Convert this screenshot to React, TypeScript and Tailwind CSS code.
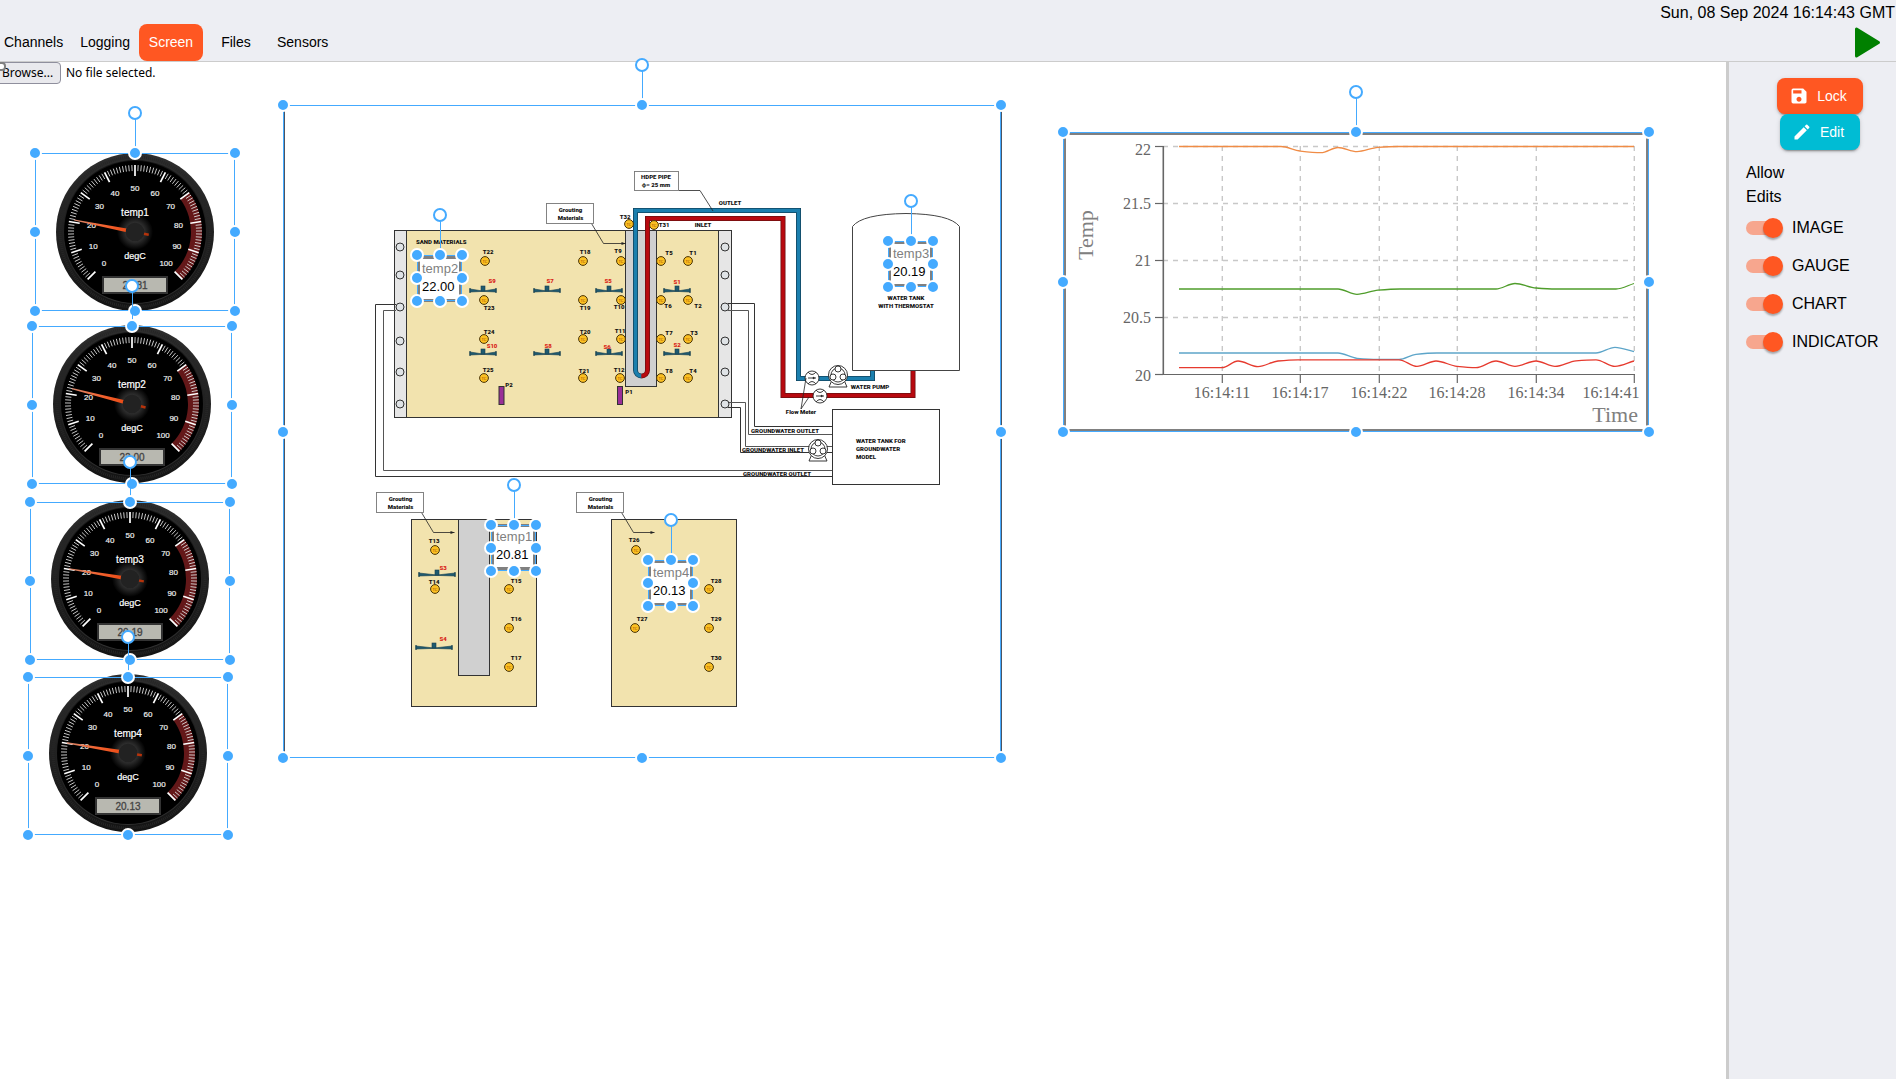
import React, { useState } from "react";
import { MdEdit, MdSave } from "react-icons/md";

type Box = { x: number; y: number; w: number; h: number };
type Point = [number, number];

/* ------------------------------------------------------------------ */
/* Canvas placement and selection handles                              */
/* ------------------------------------------------------------------ */

const Placed = ({ box, children }: { box: Box; children: React.ReactNode }) => (
  <div className="absolute" style={{ left: box.x, top: box.y, width: box.w, height: box.h }}>
    {children}
  </div>
);

const HANDLES: Point[] = [
  [0, 0],
  [50, 0],
  [100, 0],
  [0, 50],
  [100, 50],
  [0, 100],
  [50, 100],
  [100, 100],
];

const Selection = ({ box }: { box: Box }) => (
  <Placed box={box}>
    <div className="absolute inset-0 border border-[#44aaff]" />
    <div className="absolute bottom-full left-1/2 h-10 w-px bg-[#44aaff]" />
    <div className="absolute -top-[47px] left-1/2 size-3.5 -translate-x-1/2 rounded-full border-2 border-[#44aaff] bg-white" />
    {HANDLES.map(([hx, hy]) => (
      <div
        key={`${hx}-${hy}`}
        className="absolute size-3.5 -translate-x-1/2 -translate-y-1/2 rounded-full border-2 border-white bg-[#44aaff]"
        style={{ left: `${hx}%`, top: `${hy}%` }}
      />
    ))}
  </Placed>
);

/* ------------------------------------------------------------------ */
/* Radial gauge                                                        */
/* ------------------------------------------------------------------ */

const polar = (value: number, r: number): Point => {
  const a = ((value * 2.7 - 135) * Math.PI) / 180;
  return [Math.sin(a) * r, -Math.cos(a) * r];
};

const Gauge = ({ name, value }: { name: string; value: number }) => {
  const [b1, b2, b3, b4] = [polar(70, 67), polar(100, 67), polar(100, 56), polar(70, 56)];
  const id = `gauge-${name}`;
  return (
    <svg viewBox="-79 -79 158 158" className="block size-full font-['Liberation_Sans',sans-serif]" role="img" aria-label={`${name} ${value.toFixed(2)} degC`}>
      <defs>
        <linearGradient id={`${id}-rim`} x1="0" y1="0" x2="0" y2="1">
          <stop offset="0" stopColor="#2e2e2e" />
          <stop offset="1" stopColor="#141414" />
        </linearGradient>
        <linearGradient id={`${id}-rim2`} x1="0" y1="0" x2="0" y2="1">
          <stop offset="0" stopColor="#141414" />
          <stop offset="1" stopColor="#303030" />
        </linearGradient>
        <linearGradient id={`${id}-needle`} gradientUnits="userSpaceOnUse" x1="0" y1="0" x2="0" y2="-62">
          <stop offset="0" stopColor="#e8450f" />
          <stop offset="0.5" stopColor="#f2622f" />
          <stop offset="1" stopColor="#d98a6e" />
        </linearGradient>
        <radialGradient id={`${id}-glow`}>
          <stop offset="0.5" stopColor="#303030" />
          <stop offset="1" stopColor="#000" />
        </radialGradient>
      </defs>
      <circle r="79" fill={`url(#${id}-rim)`} />
      <circle r="75" fill="none" stroke="#262626" strokeWidth="3" strokeDasharray="1 1" />
      <circle r="72" fill={`url(#${id}-rim2)`} />
      <circle r="71" fill="#000" />
      <circle r="18" fill={`url(#${id}-glow)`} />
      <path d={`M${b1} A67 67 0 0 1 ${b2} L${b3} A56 56 0 0 0 ${b4} Z`} fill="#641819" />
      {Array.from({ length: 101 }, (_, v) => {
        const major = v % 10 === 0;
        const [x1, y1] = polar(v, 67);
        const [x2, y2] = polar(v, major ? 56 : 61);
        return (
          <line key={v} x1={x1} y1={y1} x2={x2} y2={y2} stroke={major ? "#fff" : "#ddd"} strokeWidth={major ? 1.7 : 0.9} />
        );
      })}
      <g fill="#eee" stroke="#eee" strokeWidth="0.2" fontSize="8" textAnchor="middle">
        {Array.from({ length: 11 }, (_, i) => {
          const [x, y] = polar(i * 10, 44);
          return (
            <text key={i} x={x} y={y + 3}>
              {i * 10}
            </text>
          );
        })}
      </g>
      <g fill="#fff" stroke="#fff" strokeWidth="0.2" textAnchor="middle">
        <text y="-16" fontSize="10">{name}</text>
        <text y="27" fontSize="9">degC</text>
      </g>
      <g transform={`rotate(${value * 2.7 - 135})`}>
        <path d="M-2 0 L-0.6 -62 L0.6 -62 L2 0 Z" fill={`url(#${id}-needle)`} />
        <path d="M-1.2 0 L-1.2 14 L1.2 14 L1.2 0 Z" fill="#b5330b" />
      </g>
      <circle r="9.3" fill="#222" />
      <rect x="-32" y="45" width="64" height="16" fill="#b8b8b0" stroke="#333" strokeWidth="2" />
      <text y="57" fontSize="10" fill="#444" stroke="#444" strokeWidth="0.3" textAnchor="middle">
        {value.toFixed(2)}
      </text>
    </svg>
  );
};

/* ------------------------------------------------------------------ */
/* Line chart                                                          */
/* ------------------------------------------------------------------ */

const curve = (pts: Point[]) => {
  const n = pts.length;
  const slope = (i: number) => (pts[i + 1][1] - pts[i][1]) / (pts[i + 1][0] - pts[i][0]);
  const tangent = (i: number) => {
    if (i === 0 || i === n - 1) return i === 0 ? slope(0) : slope(n - 2);
    const a = slope(i - 1);
    const b = slope(i);
    return a * b <= 0 ? 0 : (2 * a * b) / (a + b);
  };
  let d = `M${pts[0]}`;
  for (let i = 0; i < n - 1; i++) {
    const [x0, y0] = pts[i];
    const [x1, y1] = pts[i + 1];
    const dx = (x1 - x0) / 3;
    d += ` C${x0 + dx},${y0 + dx * tangent(i)} ${x1 - dx},${y1 - dx * tangent(i + 1)} ${x1},${y1}`;
  }
  return d;
};

const SERIES: { color: string; pts: Point[] }[] = [
  {
    color: "#f08c46",
    pts: [[116, 14.5], [218, 14.5], [237, 19], [258, 20.7], [275, 15.5], [294, 19.6], [315, 15.3], [335, 14.5], [571, 14.5]],
  },
  {
    color: "#4f9d2b",
    pts: [[116, 157], [275, 157], [294, 162.3], [315, 158.2], [337, 157], [433, 157], [452, 151.5], [473, 156], [493, 157], [553, 157], [571, 151.5]],
  },
  {
    color: "#5da5c9",
    pts: [[116, 221], [275, 221], [294, 226.3], [315, 227.4], [336, 227.4], [353, 222.3], [374, 221], [533, 221], [552, 215.3], [571, 219.7]],
  },
  {
    color: "#e63a2e",
    pts: [[116, 235.7], [159, 235.7], [175, 229], [195, 234.6], [215, 229], [235, 227.8], [336, 227.8], [354, 234.4], [373, 229], [394, 234.4], [413, 235.7], [433, 229], [452, 234.4], [473, 229], [492, 234.4], [513, 228.8], [533, 227.8], [552, 234.4], [571, 229]],
  },
];

/* tick position, label centre, label */
const TIMES: [number, number, string][] = [
  [159, 159, "16:14:11"],
  [237, 237, "16:14:17"],
  [316, 316, "16:14:22"],
  [394, 394, "16:14:28"],
  [473, 473, "16:14:34"],
  [571, 548, "16:14:41"],
];

const TempChart = () => (
  <div className="size-full border-3 border-[#808080] bg-white">
    <svg viewBox="3 3 580 294" className="block size-full font-['Liberation_Serif',serif]" role="img" aria-label="Temp over Time">
      <g stroke="#c8c8c8" strokeDasharray="5 5" strokeWidth="1.4">
        {[14.5, 71.5, 128.5, 185.5].map((y) => (
          <line key={y} x1="100" x2="571" y1={y} y2={y} />
        ))}
        {TIMES.map(([x]) => (
          <line key={x} x1={x + 0.3} x2={x + 0.3} y1="14" y2="242" />
        ))}
      </g>
      <g stroke="#666" strokeWidth="1.2">
        <line x1="100.3" x2="100.3" y1="14" y2="243" strokeWidth="1.6" />
        <line x1="100" x2="572" y1="242.5" y2="242.5" />
        {[14.5, 71.5, 128.5, 185.5, 242.5].map((y) => (
          <line key={y} x1="92" x2="100" y1={y} y2={y} />
        ))}
        {TIMES.map(([x]) => (
          <line key={x} x1={x + 0.3} x2={x + 0.3} y1="242" y2="251" />
        ))}
      </g>
      <g fill="#666" fontSize="16">
        <g textAnchor="end">
          <text x="88" y="23">22</text>
          <text x="88" y="77">21.5</text>
          <text x="88" y="134">21</text>
          <text x="88" y="191">20.5</text>
          <text x="88" y="249">20</text>
        </g>
        <g textAnchor="middle">
          {TIMES.map(([x, tx, label]) => (
            <text key={x} x={tx} y="266">{label}</text>
          ))}
        </g>
      </g>
      <g fill="#808080" fontSize="22">
        <text x="575" y="290" textAnchor="end">Time</text>
        <text transform="translate(30 128) rotate(-90)">Temp</text>
      </g>
      {SERIES.map((s) => (
        <path key={s.color} d={curve(s.pts)} fill="none" stroke={s.color} strokeWidth="1.3" />
      ))}
    </svg>
  </div>
);

/* ------------------------------------------------------------------ */
/* Test rig schematic                                                  */
/* ------------------------------------------------------------------ */

/* name, sensor centre, label centre */
const THERMOCOUPLES: [string, number, number, number, number][] = [
  ["T22", 485, 261, 488, 252],
  ["T18", 583, 261, 585, 252],
  ["T9", 621, 261, 618, 251],
  ["T5", 661, 261, 669, 253],
  ["T1", 688, 261, 693, 253],
  ["T23", 484, 300, 489, 308],
  ["T19", 583, 300, 585, 308],
  ["T10", 621, 300, 619, 307],
  ["T6", 661, 300, 668, 306],
  ["T2", 688, 300, 698, 306],
  ["T24", 484, 339, 489, 332],
  ["T20", 583, 339, 585, 332],
  ["T11", 621, 339, 620, 331],
  ["T7", 661, 339, 669, 333],
  ["T3", 688, 339, 694, 333],
  ["T25", 484, 378, 488, 370],
  ["T21", 583, 378, 584, 371],
  ["T12", 620, 378, 619, 370],
  ["T8", 661, 378, 669, 371],
  ["T4", 688, 378, 693, 371],
  ["T32", 629, 224, 625, 217],
  ["T31", 654, 225, 664, 225],
  ["T13", 435, 550, 434, 541],
  ["T14", 435, 589, 434, 582],
  ["T15", 509, 589, 516, 581],
  ["T16", 509, 628, 516, 619],
  ["T17", 509, 667, 516, 658],
  ["T26", 636, 550, 634, 540],
  ["T27", 635, 628, 642, 619],
  ["T28", 709, 589, 716, 581],
  ["T29", 709, 628, 716, 619],
  ["T30", 709, 667, 716, 658],
];

/* name, gauge centre, half length, label centre */
const STRAIN: [string, number, number, number, number, number][] = [
  ["S9", 483, 290, 13, 492, 281],
  ["S7", 547, 290, 13, 550, 281],
  ["S5", 609, 290, 13, 608, 281],
  ["S1", 677, 290, 13, 677, 282],
  ["S10", 483, 353, 13, 492, 346],
  ["S8", 547, 353, 13, 548, 346],
  ["S6", 609, 353, 13, 607, 347],
  ["S2", 677, 353, 13, 677, 345],
  ["S3", 437, 574, 18, 443, 568],
  ["S4", 434, 647, 18, 443, 639],
];

const SIDE_PORTS = [247, 275, 307, 341, 372, 404];

const Grouting = ({ x, y, lead }: { x: number; y: number; lead: number }) => (
  <g>
    <path d={`M${x + 45} ${y + 20} l12 20 h${lead}`} fill="none" stroke="#222" strokeWidth="0.8" />
    <path d={`M${x + 57 + lead} ${y + 40} l-4 -1.5 v3 z`} fill="#222" />
    <rect x={x} y={y} width="47" height="20" fill="#fff" stroke="#777" strokeWidth="0.9" />
    <text x={x + 24} y={y + 8} textAnchor="middle">Grouting</text>
    <text x={x + 24} y={y + 16} textAnchor="middle">Materials</text>
  </g>
);

const Pump = ({ x, y }: { x: number; y: number }) => (
  <g fill="#fff" stroke="#222" strokeWidth="0.9">
    <path d={`M${x - 6} ${y + 5} L${x - 9} ${y + 12} H${x + 9} L${x + 6} ${y + 5} Z`} />
    <circle cx={x} cy={y} r="9.5" />
    <circle cx={x} cy={y} r="7" />
    <circle cx={x} cy={y - 6} r="3" />
    <circle cx={x - 5} cy={y + 2} r="3" />
    <circle cx={x + 5} cy={y + 2} r="3" />
  </g>
);

const FlowMeter = ({ x, y }: { x: number; y: number }) => (
  <g fill="#fff" stroke="#222" strokeWidth="0.9">
    <circle cx={x} cy={y} r="7" />
    <path d={`M${x - 4} ${y - 6} Q${x} ${y - 1} ${x + 4} ${y - 6} M${x - 4} ${y + 6} Q${x} ${y + 1} ${x + 4} ${y + 6} M${x - 4} ${y} h6`} />
    <path d={`M${x + 4} ${y} l-3 -1 v2 z`} fill="#222" strokeWidth="0.4" />
  </g>
);

const Pipe = ({ d, color, edge }: { d: string; color: string; edge: string }) => (
  <g fill="none" strokeLinejoin="miter">
    <path d={d} stroke={edge} strokeWidth="5" />
    <path d={d} stroke={color} strokeWidth="3.4" />
  </g>
);

const Schematic = () => (
  <svg
    viewBox="283 105 718 653"
    className="block size-full overflow-visible bg-white font-['Roboto',sans-serif]"
    role="img"
    aria-label="Ground heat exchanger test rig"
  >
    <path d="M284.5 105 V758 M1001.5 105 V758" stroke="#4b5563" />

    {/* soil box */}
    <rect x="394.5" y="230.5" width="337" height="187" fill="#e6e6e6" stroke="#333" />
    <rect x="406.5" y="230.5" width="312" height="187" fill="#f2e3ae" stroke="#333" />
    <rect x="625.5" y="230.5" width="31" height="156" fill="#d0d0d0" stroke="#333" />

    {/* groundwater lines */}
    <g fill="none" stroke="#333">
      <path d="M396 304.5 H375.5 V476.5 H832" />
      <path d="M396 310.5 H383.5 V470.5 H832" stroke="#555" />
      <path d="M728 303.5 H754.5 V426.5 H832" />
      <path d="M728 310.5 H748.5 V434.5 H832" stroke="#555" />
      <path d="M728 402.5 H745.5 V446.5 H832" stroke="#555" />
      <path d="M728 407.5 H740.5 V452.5 H832" />
    </g>
    <g fill="#dfe3e6" stroke="#333">
      {SIDE_PORTS.map((y) => (
        <React.Fragment key={y}>
          <circle cx="400" cy={y} r="4" />
          <circle cx="725" cy={y} r="4" />
        </React.Fragment>
      ))}
    </g>

    {/* supply and return pipes */}
    <Pipe d="M641.5 376 A6 6 0 0 1 635.5 370 V210.5 H798.5 V378.5 H872.5 V370" color="#1b7fae" edge="#12455f" />
    <Pipe d="M641.5 376 A6 6 0 0 0 647.5 370 V218.5 H783 V395.5 H913 V370" color="#b8090f" edge="#6d1012" />

    {/* tanks */}
    <path d="M852.5 370.5 V226.5 Q862 214 906 213.5 Q950 214 959.5 226.5 V370.5 Z" fill="#fff" stroke="#444" />
    <rect x="832.5" y="409.5" width="107" height="75" fill="#fff" stroke="#333" />

    <FlowMeter x={812} y={378} />
    <FlowMeter x={820} y={396} />
    <Pump x={838} y={375} />
    <Pump x={818} y={449} />
    <path d="M801 409 L806 378 M801 409 L809 397" fill="none" stroke="#222" strokeWidth="0.8" />

    {/* sections */}
    <g stroke="#333">
      <rect x="411.5" y="519.5" width="125" height="187" fill="#f2e3ae" />
      <rect x="458.5" y="519.5" width="31" height="156" fill="#d0d0d0" />
      <rect x="611.5" y="519.5" width="125" height="187" fill="#f2e3ae" />
      <rect x="499" y="386.5" width="5" height="18" fill="#9a2f97" />
      <rect x="617.5" y="386.5" width="5" height="18" fill="#9a2f97" />
    </g>

    {/* strain gauges */}
    {STRAIN.map(([name, x, y, half, lx, ly]) => (
      <g key={name}>
        <path
          d={`M${x - half} ${y - 2} v5 M${x + half} ${y - 2} v5`}
          stroke="#173f4f"
          strokeWidth="1.2"
        />
        <path
          d={`M${x - half} ${y - 1} L${x} ${y + 1} L${x + half} ${y - 1} v3 L${x} ${y + 1.4} L${x - half} ${y + 2} Z`}
          fill="#1f5a70"
          stroke="#173f4f"
          strokeWidth="0.6"
        />
        <rect x={x - 2} y={y - 4} width="4" height="5" fill="#1f5a70" stroke="#173f4f" strokeWidth="0.6" />
        <text x={lx} y={ly + 2} fontSize="6" fontWeight="900" textAnchor="middle" fill="#d91e18">
          {name}
        </text>
      </g>
    ))}

    {/* thermocouples */}
    {THERMOCOUPLES.map(([name, x, y, lx, ly]) => (
      <g key={name} textAnchor="middle">
        <circle cx={x} cy={y} r="4.4" fill="#fbc022" stroke="#4a3508" />
        <text x={x} y={y + 1.5} fontSize="4" fill="#a04a00">TC</text>
        <text x={lx} y={ly + 2} fontSize="6" fontWeight="900" fill="#111">
          {name}
        </text>
      </g>
    ))}

    {/* annotations */}
    <g fill="#111" fontSize="6" fontWeight="900">
      <text x="509" y="387" textAnchor="middle">P2</text>
      <text x="629" y="394" textAnchor="middle">P1</text>
      <text x="416" y="244">SAND MATERIALS</text>
      <Grouting x={546.5} y={203.5} lead={22} />
      <Grouting x={376.5} y={492.5} lead={21} />
      <Grouting x={576.5} y={492.5} lead={21} />
      <path d="M678.5 190.5 H700 L713 211" fill="none" stroke="#222" strokeWidth="0.8" />
      <rect x="634.5" y="171.5" width="44" height="19" fill="#fff" stroke="#777" strokeWidth="0.9" />
      <g textAnchor="middle">
        <text x="656" y="179">HDPE PIPE</text>
        <text x="656" y="187">ϕ= 25 mm</text>
        <text x="730" y="205">OUTLET</text>
        <text x="703" y="227">INLET</text>
        <text x="906" y="300">WATER TANK</text>
        <text x="906" y="308">WITH THERMOSTAT</text>
        <text x="870" y="389">WATER PUMP</text>
        <text x="801" y="414">Flow Meter</text>
        <text x="785" y="433">GROUNDWATER OUTLET</text>
        <text x="773" y="452">GROUNDWATER INLET</text>
        <text x="777" y="476">GROUNDWATER OUTLET</text>
      </g>
      <text x="856" y="443">WATER TANK FOR</text>
      <text x="856" y="451">GROUNDWATER</text>
      <text x="856" y="459">MODEL</text>
    </g>
  </svg>
);

/* ------------------------------------------------------------------ */
/* Indicator                                                           */
/* ------------------------------------------------------------------ */

const Indicator = ({ name, value }: { name: string; value: number }) => (
  <div className="size-full border-3 border-[#808080] bg-white pt-px pl-0.5 text-[13px] leading-[18px]">
    <div className="text-[#808080]">{name}</div>
    <div>{value.toFixed(2)}</div>
  </div>
);

/* ------------------------------------------------------------------ */
/* Canvas content                                                      */
/* ------------------------------------------------------------------ */

const GAUGES = [
  { name: "temp1", value: 20.81, at: { x: 56, y: 91, w: 158, h: 158 }, frame: { x: 35, y: 91, w: 200, h: 158 } },
  { name: "temp2", value: 22.0, at: { x: 53, y: 263, w: 158, h: 158 }, frame: { x: 32, y: 264, w: 200, h: 158 } },
  { name: "temp3", value: 20.19, at: { x: 51, y: 438, w: 158, h: 158 }, frame: { x: 30, y: 440, w: 200, h: 158 } },
  { name: "temp4", value: 20.13, at: { x: 49, y: 612, w: 158, h: 158 }, frame: { x: 28, y: 615, w: 200, h: 158 } },
];

const INDICATORS = [
  { name: "temp2", value: 22.0, at: { x: 417, y: 194, w: 45, h: 46 }, frame: { x: 417, y: 193, w: 45, h: 46 } },
  { name: "temp3", value: 20.19, at: { x: 888, y: 179, w: 45, h: 46 }, frame: { x: 888, y: 179, w: 45, h: 46 } },
  { name: "temp1", value: 20.81, at: { x: 491, y: 462, w: 45, h: 46 }, frame: { x: 491, y: 463, w: 45, h: 46 } },
  { name: "temp4", value: 20.13, at: { x: 648, y: 498, w: 45, h: 46 }, frame: { x: 648, y: 498, w: 45, h: 46 } },
];

const IMAGE_BOX = { x: 283, y: 43, w: 718, h: 653 };
const CHART_BOX = { x: 1063, y: 70, w: 586, h: 300 };

const Canvas = () => (
  <main className="relative min-w-0 flex-1 bg-white">
    <label className="-ml-1.5 flex items-center gap-[5px] font-['Noto_Sans',sans-serif] text-xs leading-5">
      <input type="file" className="sr-only" />
      <span className="w-[67px] rounded border border-[#8f8f9d] bg-[#e9e9ed] pl-[7px]">Browse...</span>
      <span>No file selected.</span>
    </label>
    <div className="absolute top-0 -left-1 h-[9px] w-2.5 rounded-sm border-2 border-[#808080] bg-white" />

    {GAUGES.map((g) => (
      <Placed key={g.name} box={g.at}>
        <Gauge name={g.name} value={g.value} />
      </Placed>
    ))}
    <Placed box={IMAGE_BOX}>
      <Schematic />
    </Placed>
    <Placed box={CHART_BOX}>
      <TempChart />
    </Placed>
    {INDICATORS.map((i) => (
      <Placed key={i.name} box={i.at}>
        <Indicator name={i.name} value={i.value} />
      </Placed>
    ))}

    {GAUGES.map((g) => (
      <Selection key={g.name} box={g.frame} />
    ))}
    <Selection box={IMAGE_BOX} />
    <Selection box={CHART_BOX} />
    {INDICATORS.map((i) => (
      <Selection key={i.name} box={i.frame} />
    ))}
  </main>
);

/* ------------------------------------------------------------------ */
/* Page chrome                                                         */
/* ------------------------------------------------------------------ */

const TABS = ["Channels", "Logging", "Screen", "Files", "Sensors"];

const Header = () => {
  const [tab, setTab] = useState("Screen");
  return (
    <header className="border-b border-[#cccccc]">
      <div className="h-6 pr-px text-right text-base leading-[26px]">Sun, 08 Sep 2024 16:14:43 GMT</div>
      <div className="flex items-center justify-between">
        <nav className="-ml-1 flex gap-px">
          {TABS.map((t) => (
            <button
              key={t}
              onClick={() => setTab(t)}
              className={`h-[37px] min-w-16 rounded-lg px-2 pb-0.5 text-sm ${t === tab ? "bg-[#ff5722] text-white" : ""}`}
            >
              {t}
            </button>
          ))}
        </nav>
        <button aria-label="Run" className="mr-3.5">
          <svg viewBox="0 0 28 34" className="block h-[34px] w-7" fill="#008000" stroke="#008000" strokeWidth="3" strokeLinejoin="round">
            <path d="M2.5 3 V30 L24.5 16.5 Z" />
          </svg>
        </button>
      </div>
    </header>
  );
};

const ACTION = "flex h-9 items-center gap-2 rounded-lg pr-4 pl-3 text-sm text-white shadow-[0_3px_1px_-2px_rgba(0,0,0,0.2),0_2px_2px_rgba(0,0,0,0.14),0_1px_5px_rgba(0,0,0,0.12)]";

const Sidebar = () => {
  const [allowed, setAllowed] = useState<Record<string, boolean>>({ IMAGE: true, GAUGE: true, CHART: true, INDICATOR: true });
  return (
    <aside className="w-[170px] shrink-0 border-l-3 border-[#cccccc] pt-4 pr-px pl-4">
      <div className="flex flex-col items-center">
        <button className={`${ACTION} bg-[#ff5722]`}>
          <MdSave className="size-5" />
          Lock
        </button>
        <button className={`${ACTION} bg-[#00bcd4]`}>
          <MdEdit className="size-5" />
          Edit
        </button>
      </div>
      <h2 className="mt-[11px] w-14 pl-px text-base leading-6">Allow Edits</h2>
      {Object.keys(allowed).map((key) => (
        <label key={key} className="flex h-[38px] items-center gap-3 pl-px text-base">
          <input
            type="checkbox"
            checked={allowed[key]}
            onChange={() => setAllowed({ ...allowed, [key]: !allowed[key] })}
            className="relative h-3.5 w-[34px] appearance-none rounded-full bg-[#bdbdbd] after:absolute after:-top-[3px] after:-left-[3px] after:size-5 after:rounded-full after:bg-white after:shadow-[0_2px_2px_rgba(0,0,0,0.3)] after:content-[''] checked:bg-[#f7a68e] checked:after:left-[17px] checked:after:bg-[#ff5722]"
          />
          {key}
        </label>
      ))}
    </aside>
  );
};

export default function App() {
  return (
    <div className="flex min-h-screen flex-col overflow-x-hidden bg-[#edeef3] font-['Liberation_Sans',Arial,sans-serif] text-black">
      <Header />
      <div className="flex flex-1">
        <Canvas />
        <Sidebar />
      </div>
    </div>
  );
}
